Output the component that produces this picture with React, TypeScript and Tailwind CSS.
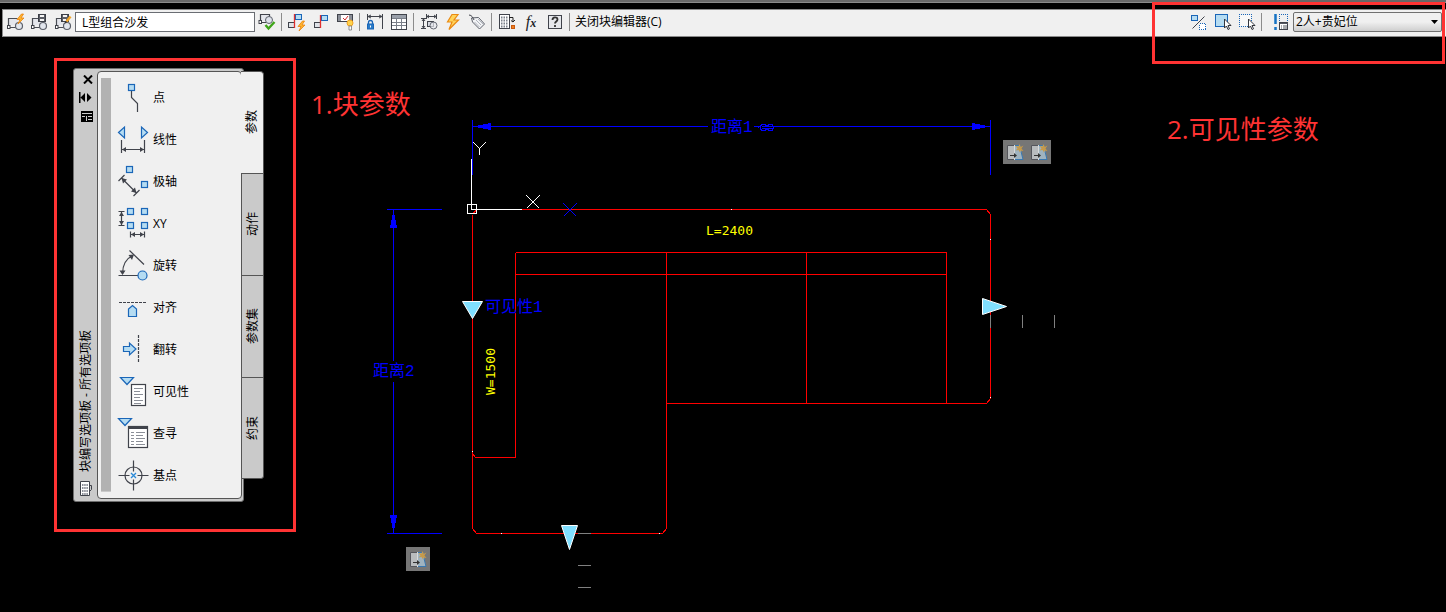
import { useState } from "react";
import type { ReactNode } from "react";

const INK = "#40434b";
const BLUE = "#1a66b8";
const SKY = "#b5dcf2";

const Icon = ({ children }: { children: ReactNode }) => (
  <svg width="18" height="18" viewBox="0 0 18 18" fill="none" stroke={INK} strokeWidth="1">
    {children}
  </svg>
);

const BlockBase = () => (
  <>
    <path d="M3 6h11v6H3z" fill="#e4e6ec" stroke="none" />
    <path d="M2.5 12V5.5h9M4 14.5h6" stroke="#4a4d55" strokeWidth="1.2" />
    <rect x="1.5" y="12.5" width="2.5" height="3" fill="#fff" />
    <circle cx="13" cy="13" r="3.5" fill="#dfe3ec" fillOpacity=".8" stroke="#5c606a" strokeWidth="1.2" />
  </>
);

const Bolt = ({ x = 0, y = 0 }: { x?: number; y?: number }) => (
  <path
    transform={`translate(${x} ${y})`}
    d="M4.5 0 0 5.5h3L1 10l6-6H4L6.5 0z"
    fill="#ffb52e"
    stroke="#e8820c"
    strokeWidth=".8"
  />
);

const EditBlockIcon = () => (
  <Icon>
    <BlockBase />
    <Bolt x={11} y={1} />
  </Icon>
);

const SaveBlockIcon = () => (
  <Icon>
    <BlockBase />
    <rect x="8.5" y="1.5" width="7" height="7" fill="#5b5e66" stroke="#3c3f47" />
    <path d="M10 2h4v2h-4zM10 6h4v2h-4z" fill="#f4f4f4" stroke="none" />
  </Icon>
);

const SaveAsIcon = () => (
  <Icon>
    <BlockBase />
    <rect x="7.5" y="1.5" width="7" height="7" fill="#5b5e66" stroke="#3c3f47" />
    <path d="M9 2h4v2H9zM9 6h3v2H9z" fill="#f4f4f4" stroke="none" />
    <path d="M16.500 3.500 12.500 8.500" stroke="#f0a52a" strokeWidth="2.5" />
    <path d="m11.500 8-1 2.500 2.500-1" fill="#333" stroke="none" />
  </Icon>
);

const TestBlockIcon = () => (
  <Icon>
    <path d="M3 2h8v6H3z" fill="#e4e6ec" stroke="none" />
    <path d="M2.5 8V1.500h9v3M4 9.500h4" strokeWidth="1.2" />
    <rect x="1" y="7.5" width="2.5" height="3" fill="#fff" />
    <circle cx="11" cy="7" r="3.5" fill="#dfe3ec" stroke="#5c606a" />
    <path d="m7.500 12 3 3.500L16.500 9" stroke="#3fa51a" strokeWidth="2.4" />
  </Icon>
);

const AutoConstrainIcon = () => (
  <Icon>
    <rect x=".5" y="9.5" width="6" height="5" fill="#dfe3e8" />
    <rect x="7.5" y="1.5" width="6" height="5" fill={SKY} stroke={BLUE} />
    <path d="M6.500 15V1" stroke="#e03030" strokeWidth="1.3" />
    <Bolt x={10} y={8} />
  </Icon>
);

const ConstraintIcon = () => (
  <Icon>
    <rect x="2.5" y="9.5" width="6" height="5" fill="#dfe3e8" />
    <rect x="9.5" y="2.5" width="6" height="5" fill={SKY} stroke={BLUE} />
    <path d="M8.500 15V2" stroke="#e03030" strokeWidth="1.3" />
  </Icon>
);

const DisplayConstraintIcon = () => (
  <Icon>
    <rect x="1.500" y="1.500" width="15" height="7" fill="#fff" />
    <path d="M2 2h3v6H2zM13 2h3v6h-3z" fill="#8b8f98" stroke="none" />
    <path d="m7 5 2 2 3-4" stroke="#d32f2f" />
    <circle cx="14" cy="10" r="3" fill="#ffd34d" stroke="#f0a020" />
    <path d="M13 13h2.500v4H13z" fill="#fff" stroke="#777" strokeWidth=".8" />
  </Icon>
);

const ParameterLockIcon = () => (
  <Icon>
    <path d="M1.500 1v6M16.500 1v15M2 3.500h14M5 2 2 3.500 5 5M13 2l3 1.500L13 5" />
    <rect x="1.500" y="11" width="6" height="5" fill="#2a7cc8" stroke={BLUE} />
    <path d="M2.500 11V9.500a2 2 0 0 1 4 0V11" stroke={BLUE} strokeWidth="1.3" />
    <path d="M4.500 12.500v2" stroke="#fff" />
  </Icon>
);

const TableIcon = () => (
  <Icon>
    <rect x="1.500" y="1.500" width="15" height="15" fill="#fff" />
    <path d="M2 2h14v3H2z" fill="#9aa0aa" stroke="none" />
    <path d="M2 5.500h14M2 9.500h14M2 12.500h14M6.500 5.500V16M11.500 5.500V16" stroke="#7b808a" />
  </Icon>
);

const ParameterIcon = () => (
  <Icon>
    <path d="M6.500 1v5M16.500 1v5M7 3.500h9M9 2 7 3.500 9 5M14 2l2 1.500L14 5M1 5.500h5M1 15.500h5M3.500 6v9M2 8l1.500-2L5 8M2 13l1.500 2L5 13" />
    <rect x="7.500" y="8.500" width="6" height="5" fill="#d5d9e0" />
    <circle cx="13.500" cy="12.500" r="3.5" fill="#e8eaef" fillOpacity=".7" stroke="#666a74" />
  </Icon>
);

const ActionIcon = () => (
  <Icon>
    <path d="M8 1.500 3.500 9H8l-3 7.500L14.500 7H10l4-5.500z" fill="#ffd35a" stroke="#ea8a12" strokeWidth="1.2" />
  </Icon>
);

const AttributeIcon = () => (
  <Icon>
    <path d="m3.500 5 7-.5 6 6.500-5 5-7-7z" fill="#f2f3f5" stroke="#5c606a" />
    <path d="m8 7 5 5M6.500 9l5 5M10 6l5 5" stroke="#b0b4bd" />
    <path d="M1 2c3 0 4 3 5 5" stroke="#40434b" />
  </Icon>
);

const AuthoringPaletteIcon = () => (
  <Icon>
    <rect x="1.500" y="1.500" width="10" height="14" fill="#fff" />
    <path d="M3 4.500h7M3 7.500h7M3 10.500h7M3 13.500h7" stroke="#7b808a" strokeWidth="2" strokeDasharray="1.5 1" />
    <path d="M11 4.500h4V9M13 7.500 15 9l2-2" stroke="#222" />
    <rect x="13.500" y="12.500" width="3" height="3" fill="#f08020" stroke="#c85a10" />
  </Icon>
);

const HelpIcon = () => (
  <Icon>
    <rect x="2.500" y="2.500" width="13" height="13" fill="#e6e8ec" />
    <path d="M6.500 7c0-3.500 5-3.500 5-.5 0 2-2.500 2-2.500 4M9 12v2" stroke="#333" strokeWidth="1.8" />
  </Icon>
);

const VisibilityModeIcon = () => (
  <Icon>
    <rect x="1.500" y="2.500" width="6" height="5" fill={SKY} stroke={BLUE} />
    <path d="M2.500 15.500 14.500 3.500" />
    <rect x="9.500" y="10.500" width="6" height="6" fill="#fff" stroke={BLUE} strokeDasharray="1 1" shapeRendering="crispEdges" />
  </Icon>
);

const Cursor = () => (
  <path d="M10.500 6v9l2-2 1.500 3.500 1.500-.7-1.500-3.300h3z" fill="#fff" stroke="#33363d" />
);

const MakeVisibleIcon = () => (
  <Icon>
    <rect x="1.500" y="1.500" width="12" height="12" fill={SKY} stroke={BLUE} />
    <Cursor />
  </Icon>
);

const MakeInvisibleIcon = () => (
  <Icon>
    <path d="M2 2h11v11H2z" fill="#f8f8f8" stroke="none" />
    <path d="M1 1.500h13M1 13.500h13M1.500 3v10M13.500 3v10" stroke={BLUE} strokeDasharray="1 1" shapeRendering="crispEdges" />
    <Cursor />
  </Icon>
);

const VisibilityStatesIcon = () => (
  <Icon>
    <path d="M3.500 1v10M3.500 14v3" stroke="#1673c4" strokeWidth="2.5" />
    <path d="M7 1.500h9M7.500 3v6M15.500 3v6" stroke={BLUE} strokeDasharray="1 1" shapeRendering="crispEdges" />
    <rect x="7.500" y="9.500" width="8" height="7" fill="#fff" />
    <path d="M8 10.500h8M9 13h1M11 13h4M9 15h1M11 15h4" stroke="#555861" />
  </Icon>
);

const ToolButton = ({ label, children }: { label: string; children: ReactNode }) => (
  <button type="button" aria-label={label} className="flex h-6 w-6 shrink-0 items-center justify-center">
    {children}
  </button>
);

const Separator = () => <span className="ml-0.5 mr-[3px] h-[18px] w-px shrink-0 bg-[#8c8c8c]" />;

const Toolbar = () => {
  const [name, setName] = useState("L型组合沙发");
  return (
    <div className="ml-0.5 flex h-7 items-center border-y border-l border-[#8a8a8a] bg-[#f0f0f0] pb-0.5 text-xs text-black">
      <ToolButton label="编辑块"><EditBlockIcon /></ToolButton>
      <ToolButton label="保存块"><SaveBlockIcon /></ToolButton>
      <ToolButton label="另存块"><SaveAsIcon /></ToolButton>
      <input
        aria-label="块名称"
        value={name}
        onChange={(e) => setName(e.target.value)}
        className="h-5 w-[180px] shrink-0 border border-[#6a6d73] bg-white px-1.5 text-xs outline-none"
      />
      <ToolButton label="测试块"><TestBlockIcon /></ToolButton>
      <Separator />
      <ToolButton label="自动约束"><AutoConstrainIcon /></ToolButton>
      <ToolButton label="几何约束"><ConstraintIcon /></ToolButton>
      <ToolButton label="显示约束"><DisplayConstraintIcon /></ToolButton>
      <Separator />
      <ToolButton label="参数约束"><ParameterLockIcon /></ToolButton>
      <ToolButton label="块表"><TableIcon /></ToolButton>
      <Separator />
      <ToolButton label="参数"><ParameterIcon /></ToolButton>
      <ToolButton label="动作"><ActionIcon /></ToolButton>
      <ToolButton label="属性"><AttributeIcon /></ToolButton>
      <Separator />
      <ToolButton label="编写选项板"><AuthoringPaletteIcon /></ToolButton>
      <button type="button" className="h-6 w-6 shrink-0 font-['Liberation_Serif',serif] text-base italic leading-none text-[#202228]">
        f<span className="text-xs font-bold">x</span>
      </button>
      <ToolButton label="帮助"><HelpIcon /></ToolButton>
      <Separator />
      <button type="button" className="shrink-0 whitespace-nowrap px-0.5">关闭块编辑器(C)</button>

      <div className="ml-auto flex items-center pr-1">
        <ToolButton label="可见性模式"><VisibilityModeIcon /></ToolButton>
        <ToolButton label="使可见"><MakeVisibleIcon /></ToolButton>
        <ToolButton label="使不可见"><MakeInvisibleIcon /></ToolButton>
        <Separator />
        <span className="w-1" />
        <ToolButton label="管理可见性状态"><VisibilityStatesIcon /></ToolButton>
        <div className="relative">
          <select
            aria-label="可见性状态"
            className="block h-5 w-[149px] appearance-none rounded-xs border border-[#707070] bg-linear-to-b from-[#f0f0f0] from-50% to-[#cfcfcf] pl-0.5 text-xs outline-none"
          >
            <option>2人+贵妃位</option>
          </select>
          <svg width="7" height="4" viewBox="0 0 7 4" className="pointer-events-none absolute right-1 top-2">
            <path d="M0 0h7L3.500 4z" fill="#000" />
          </svg>
        </div>
      </div>
    </div>
  );
};

const Node = ({ x, y }: { x: number; y: number }) => (
  <rect x={x} y={y} width="6" height="6" fill={SKY} stroke={BLUE} />
);

const items: { name: string; icon: ReactNode }[] = [
  {
    name: "点",
    icon: (
      <>
        <path d="M14.500 14v6.500l6 6V35" />
        <Node x={11.5} y={7.5} />
      </>
    ),
  },
  {
    name: "线性",
    icon: (
      <>
        <path d="M1.500 13.500 7.500 8v11zM30.500 13.500 24.500 8v11z" fill={SKY} stroke={BLUE} />
        <path d="M4.500 21v13M27.500 21v13M5 30.500h22" />
        <path d="m5 30.500 4-2.500v5zM27 30.500 23 28v5z" fill={INK} stroke="none" />
      </>
    ),
  },
  {
    name: "极轴",
    icon: (
      <>
        <Node x={9.5} y={5.5} />
        <Node x={24.5} y={20.5} />
        <path d="m4.500 17 15 15M1.500 20l6-6M16.500 35l6-6" />
        <path d="m4.500 17 5.500 1.500L6 22.500zM19.500 32 14 30.500l4-4z" fill={INK} stroke="none" />
      </>
    ),
  },
  {
    name: "XY",
    icon: (
      <>
        <Node x={10.5} y={5.5} />
        <Node x={24.5} y={5.5} />
        <Node x={10.5} y={19.5} />
        <Node x={24.5} y={19.5} />
        <path d="M1.500 8.500h6M1.500 22.500h6M4.500 9v13M13.500 28.500v6M27.500 28.500v6M14 31.500h13" />
        <path d="m4.500 9 2.500 4H2zM4.500 22 7 18H2zM14 31.500l4-2.500v5zM27 31.500 23 29v5z" fill={INK} stroke="none" />
      </>
    ),
  },
  {
    name: "旋转",
    icon: (
      <>
        <path d="M1.500 30.500H21M12.500 5.500l14.500 14M5.500 29C5.500 21 8 14 16 10.500" />
        <path d="m5.500 30-3-4.500h6zM17 9.500 11.500 10l3.500 5z" fill={INK} stroke="none" />
        <circle cx="25.500" cy="30.500" r="4.5" fill={SKY} stroke={BLUE} />
      </>
    ),
  },
  {
    name: "对齐",
    icon: (
      <>
        <path d="M2 15.500h28" strokeDasharray="3 1" />
        <path d="M11.500 29.500V22l4-3.500 4 3.500v7.500z" fill={SKY} stroke={BLUE} />
      </>
    ),
  },
  {
    name: "翻转",
    icon: (
      <>
        <path d="M21.500 6v28" strokeDasharray="3 1" />
        <path d="M6.500 17.500h6V14l6.500 6-6.500 6v-3.500h-6z" fill={SKY} stroke={BLUE} />
      </>
    ),
  },
  {
    name: "可见性",
    icon: (
      <>
        <rect x="14.500" y="13.500" width="14" height="21" fill="#fff" />
        <path d="M17 17.500h9M17 20.500h6M17 23.500h9M17 26.500h6M17 29.500h9M17 32.500h7" stroke="#8b8f98" />
        <path d="M3.500 6.500h13L10 13.500z" fill={SKY} stroke={BLUE} />
      </>
    ),
  },
  {
    name: "查寻",
    icon: (
      <>
        <path d="M1.500 5.500h13L8 12.500z" fill={SKY} stroke={BLUE} />
        <rect x="11.500" y="13.500" width="19" height="21" fill="#fff" />
        <path d="M11 14.500h20" strokeWidth="3" />
        <path d="M14 19.500h3M19 19.500h9M14 22.500h3M19 22.500h7M14 25.500h3M19 25.500h9M14 28.500h3M19 28.500h7M14 31.500h3M19 31.500h9" stroke="#8b8f98" />
      </>
    ),
  },
  {
    name: "基点",
    icon: (
      <>
        <circle cx="16.500" cy="20.500" r="8.5" />
        <path d="M1.500 20.500h11M20.500 20.500h11M16.500 5.500v11M16.500 24.500v11" />
        <path d="m14 18 5 5M19 18l-5 5" stroke="#2a8ad8" strokeWidth="1.3" />
      </>
    ),
  },
];

const tabs = ["参数", "动作", "参数集", "约束"];

const Palette = () => {
  const [active, setActive] = useState("参数");
  return (
    <aside className="absolute left-[73px] top-[31px] flex text-xs text-black">
      <div className="flex rounded-[3px] border border-[#6e6e6e] bg-[#cacaca] py-0.5 pr-px">
        <div className="flex w-[23px] flex-col items-center py-0.5">
          <button type="button" aria-label="关闭" className="flex h-[19px] items-start justify-center pl-1 pt-0.5">
            <svg width="10" height="9" viewBox="0 0 10 9" stroke="#000" strokeWidth="2">
              <path d="m1 .5 8 8M9 .5l-8 8" />
            </svg>
          </button>
          <button type="button" aria-label="自动隐藏" className="flex h-[19px] items-start justify-center">
            <svg width="13" height="11" viewBox="0 0 13 11">
              <path d="M0 0h1.500v11H0zM6 1v9L1.500 5.500zM8 1v9l4.500-4.500z" />
            </svg>
          </button>
          <button type="button" aria-label="特性" className="flex h-[19px] items-start justify-center pl-0.5">
            <svg width="12" height="11" viewBox="0 0 12 11">
              <path d="M0 0h12v11H0z" />
              <path d="M1 2.500h10M5.500 5v5M7 5.500h4M7 8.500h4M1 5.500h3" stroke="#cacaca" />
            </svg>
          </button>
          <h2 className="mb-2 mt-auto rotate-180 whitespace-nowrap leading-4 [text-orientation:sideways] [writing-mode:vertical-rl]">
            块编写选项板 - 所有选项板
          </h2>
          <svg width="12" height="17" viewBox="0 0 12 17" fill="#fff" stroke={INK}>
            <path d="M.5 1.500h9v14h-9z" />
            <path d="M9.500 5.500h2v4l-2 2" fill="none" />
            <path d="M2 5h6M2 8h6M2 11h6M2 14h6" stroke="#8b8f98" strokeWidth="2" strokeDasharray="1.5 .7" />
          </svg>
        </div>
        <div className="flex w-[145px] rounded-[4px] border border-[#555] bg-[#f0f0f0] py-1.5 pl-[3px]">
          <div className="w-2.5 border-b border-[#cacaca] bg-[#b2b2b2]" />
          <ul className="-mb-[5px] -mt-px ml-1.5">
            {items.map((item) => (
              <li key={item.name}>
                <button type="button" className="flex h-[42px] items-center gap-1">
                  <svg width="32" height="42" viewBox="0 0 32 42" fill="none" stroke={INK} strokeWidth="1.2">
                    {item.icon}
                  </svg>
                  {item.name}
                </button>
              </li>
            ))}
          </ul>
        </div>
      </div>
      <div role="tablist" aria-orientation="vertical" className="relative -ml-[3px] mt-[3px] flex flex-col">
        {tabs.map((tab) => (
          <button
            key={tab}
            type="button"
            role="tab"
            aria-selected={tab === active}
            onClick={() => setActive(tab)}
            className={
              tab === active
                ? "flex h-[102px] w-[23px] items-center justify-center rounded-tr-[4px] border-r border-t border-[#555] bg-[#f0f0f0]"
                : "flex h-[102px] w-[23px] items-center justify-center border-l border-r border-t border-[#555] bg-[#cacaca] last:rounded-br-[3px] last:border-b"
            }
          >
            <span className="rotate-180 leading-4 [text-orientation:sideways] [writing-mode:vertical-rl]">{tab}</span>
          </button>
        ))}
      </div>
    </aside>
  );
};

// action marker shown next to a parameter, 24 x 24
const ActionBadge = ({ x, y }: { x: number; y: number }) => (
  <g transform={`translate(${x} ${y})`}>
    <path d="M0 0h24v24H0z" fill="#767676" />
    <path d="M4.500 5.500h7v14h-7z" fill="#b9bcbe" stroke="#55565c" />
    <path d="M12 5h5l3 15h-8z" fill="#9fb3c0" />
    <path d="M12 5.500h4M12 19.500h8l-2-8" stroke="#3a78b0" fill="none" />
    <path d="M11.500 5v15" stroke="#d8dadb" />
    <path d="M7 15.500h5" stroke="#333" />
    <path d="m11 13 3 2.500-3 2.500z" fill="#333" />
    <path d="m16.500 4 1 3 3-1.500-2 3 2 2.500-3-.5-.5 2-1.500-2.500-3 .5 2-2-2-2.500 3 .5z" fill="#c69a4a" />
  </g>
);

const dots = [
  [731, 209],
  [990, 239],
  [990, 397],
  [472, 451],
  [501, 533],
  [659, 533],
];

// model space; coordinates are window pixels, the group shifts them below the toolbar
const Drawing = () => (
  <svg className="absolute inset-0 h-full w-full" fill="none" strokeWidth="1">
    <g transform="translate(0 -37)">
      <g stroke="#ff0000" shapeRendering="crispEdges">
        <path d="M472.500 214.500V528.500L476.500 533.500H662.500L666.500 528.500V252.500" />
        <path d="M476.500 209.500H986.500L990.500 214.500V398.500L986.500 403.500H666.500" />
        <path d="M472.500 214.500 476.500 209.500" />
        <path d="M515.500 252.500H946.500V403M515.500 274.500H946.500M806.500 252.500V403" />
        <path d="M515.500 252.500V457.500H475.500L472.500 453.500" />
      </g>
      <g stroke="#0000ff" shapeRendering="crispEdges">
        <path d="M472.500 120V175M990.500 120V175M473 126.500H708M754 126.500H760M774 126.500H990" />
        <path d="M393.500 210V361M393.500 382V533M387 209.500H442M387 533.500H442" />
        <path d="m563.500 203.500 13 13M576.500 203.500l-13 13" />
        <path d="M758.500 126v2M762 124.500h3l2 2 2-2h3l1.500 2v2l-1.500 2h-3l-2-2-2 2h-3l-2-2v-2zM762 126.500h11M762 128.500h11" />
        <g fill="#0000ff" stroke="none">
          <path d="M473 126.500 491 123v7zM990 126.500 972 123v7z" />
          <path d="M393.500 210 390 228h7zM393.500 533 390 515h7z" />
        </g>
      </g>
      <g stroke="#ffffff" shapeRendering="crispEdges">
        <path d="M467.500 204.500h9v9h-9zM471.500 159V209.500H522" />
        <path d="m526.500 195.500 13 13M539.500 195.500l-13 13M473.500 142.500l6 6 6-6M479.500 148v7" />
      </g>
      <g fill="#0000ff" className="font-['Liberation_Mono','Noto_Sans_CJK_SC',monospace] text-base">
        <text x="711" y="132">距离1</text>
        <text x="373" y="376">距离2</text>
        <text x="485" y="312">可见性1</text>
      </g>
      <g fill="#ffff00" className="font-['DejaVu_Sans_Mono',monospace] text-[13px]">
        <text x="706" y="235">L=2400</text>
        <text transform="translate(495 395) rotate(-90)">W=1500</text>
      </g>
      <g fill="#80dfff" stroke="#ffffff">
        <path d="M462.500 301.500h20l-10 17zM982.500 298.500v16l24-8zM561.500 525.500h16l-8 24z" />
      </g>
      <path
        d="M990.500 315v13M1022.500 315v13M1054.500 315v13M578 533.500h13M578 565.500h13M578 587.500h13"
        stroke="#808080"
        shapeRendering="crispEdges"
      />
      {dots.map(([x, y]) => (
        <rect key={`${x}-${y}`} x={x} y={y} width="1" height="1" fill="#fff" />
      ))}
      <ActionBadge x={1003} y={140} />
      <ActionBadge x={1027} y={140} />
      <ActionBadge x={406} y={547} />
      <g fill="#ff3333" className="font-['Open_Sans','Noto_Sans_CJK_SC',sans-serif] text-[26px]">
        <text x="311" y="114">1.块参数</text>
        <text x="1167" y="139">2.可见性参数</text>
      </g>
    </g>
  </svg>
);

const App = () => {
  return (
    <div className="relative flex min-h-screen flex-col overflow-hidden bg-black font-['Open_Sans','Noto_Sans_CJK_SC',sans-serif]">
      <div className="mb-1.5 h-[3px] border-b border-[#8a8a8a] bg-[#686868]" />
      <Toolbar />
      <main className="relative flex-1">
        <Drawing />
        <Palette />
        <div className="pointer-events-none absolute left-[54px] top-[21px] h-[474px] w-[242px] border-3 border-[#ff3333]" />
      </main>
      <div className="pointer-events-none absolute right-px top-0.5 h-[62px] w-[293px] border-3 border-[#ff3333]" />
    </div>
  );
};

export default App;
